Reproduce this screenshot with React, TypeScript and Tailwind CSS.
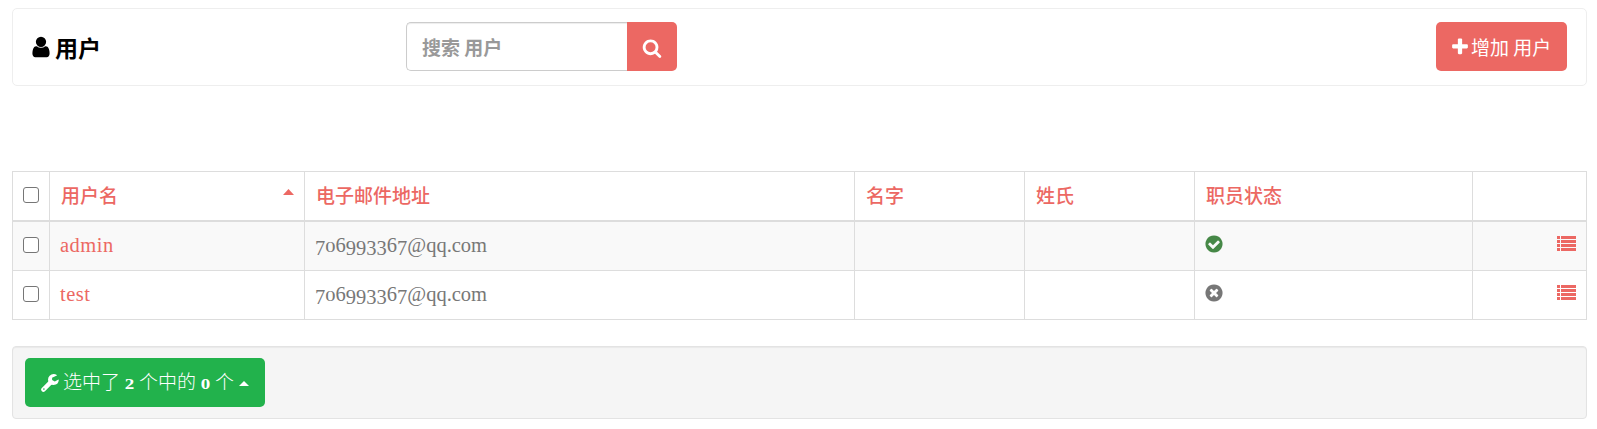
import type { ReactNode } from "react";

const CIRCLE =
  "M1664 896q0 209-103 385.5t-279.5 279.5-385.5 103-385.5-103-279.5-279.5-103-385.5 103-385.5 279.5-279.5 385.5-103 385.5 103 279.5 279.5 103 385.5z";

const paths = {
  user: "M1536 1399q0 109-62.5 187t-150.5 78h-854q-88 0-150.5-78t-62.5-187q0-85 8.5-160.5t31.5-152 58.5-131 94-89 134.5-34.5q131 128 313 128t313-128q76 0 134.5 34.5t94 89 58.5 131 31.5 152 8.5 160.5zm-256-887q0 159-112.5 271.5t-271.5 112.5-271.5-112.5-112.5-271.5 112.5-271.5 271.5-112.5 271.5 112.5 112.5 271.5z",
  search:
    "M1216 832q0-185-131.5-316.5t-316.5-131.5-316.5 131.5-131.5 316.5 131.5 316.5 316.5 131.5 316.5-131.5 131.5-316.5zm512 832q0 52-38 90t-90 38q-54 0-90-38l-343-342q-179 124-399 124-143 0-273.5-55.5t-225-150-150-225-55.5-273.5 55.5-273.5 150-225 225-150 273.5-55.5 273.5 55.5 225 150 150 225 55.5 273.5q0 220-124 399l343 343q37 37 37 90z",
  plus: "M1600 736v192q0 40-28 68t-68 28h-416v416q0 40-28 68t-68 28h-192q-40 0-68-28t-28-68v-416h-416q-40 0-68-28t-28-68v-192q0-40 28-68t68-28h416v-416q0-40 28-68t68-28h192q40 0 68 28t28 68v416h416q40 0 68 28t28 68z",
  check:
    "M1412 734q0-28-18-46l-91-90q-19-19-45-19t-45 19l-408 407-226-226q-19-19-45-19t-45 19l-91 90q-18 18-18 46 0 27 18 45l362 362q19 19 45 19 27 0 46-19l543-543q18-18 18-45z" +
    CIRCLE,
  times:
    "M1277 1122q0-26-19-45l-181-181 181-181q19-19 19-45 0-27-19-46l-90-90q-19-19-46-19-26 0-45 19l-181 181-181-181q-19-19-45-19-27 0-46 19l-90 90q-19 19-19 46 0 26 19 45l181 181-181 181q-19 19-19 45 0 27 19 46l90 90q19 19 46 19 26 0 45-19l181-181 181 181q19 19 45 19 27 0 46-19l90-90q19-19 19-46z" +
    CIRCLE,
};

function Icon({ name, className }: { name: keyof typeof paths; className: string }) {
  return (
    <svg viewBox="0 0 1792 1792" fill="currentColor" fillRule="evenodd" className={className}>
      <path d={paths[name]} />
    </svg>
  );
}

function WrenchIcon() {
  return (
    <svg viewBox="0 0 18 18" width="18" height="18" fill="none" stroke="currentColor" className="ml-px">
      <path d="M2.4 15.6L9.6 8.4" strokeWidth="4.4" strokeLinecap="round" />
      <path
        d="M15.8 1.1A5.3 5.3 0 0 0 12.6 0.1A5.6 5.6 0 0 0 7 5.7A5.6 5.6 0 0 0 12.6 11.1A5.5 5.5 0 0 0 17.8 6.1Q17.7 5.3 17 5.7L13.8 7.5L11.1 6V3.8L15.9 1.6Q16.1 1.3 15.8 1.1z"
        fill="currentColor"
        stroke="none"
      />
      <circle cx="2.9" cy="15.1" r="0.8" fill="#22b24c" stroke="none" />
    </svg>
  );
}

function ListIcon() {
  return (
    <svg viewBox="0 0 20 15" width="20" height="15" fill="currentColor" shapeRendering="crispEdges">
      {[0, 4, 8, 12].map((y) => (
        <g key={y}>
          <rect x="0" y={y} width="3" height="3" />
          <rect x="4" y={y} width="15" height="3" />
        </g>
      ))}
    </svg>
  );
}

/* Old-style numerals: 0-2 at x-height, 3 4 5 7 9 dropping below the baseline. */
function Figures({ text }: { text: string }) {
  return (
    <>
      {text.split(/([012]+|[34579]+)/).map((part, i) => {
        if (/^[012]/.test(part))
          return (
            <span key={i} className="inline-block origin-[50%_16.7px] scale-y-[0.72] leading-none">
              {part}
            </span>
          );
        if (/^[34579]/.test(part))
          return (
            <span key={i} className="relative top-[3px]">
              {part}
            </span>
          );
        return part;
      })}
    </>
  );
}

function Checkbox() {
  return (
    <span className="block size-4 rounded-[3px] border border-[#767676] bg-white" role="checkbox" aria-checked={false} />
  );
}

function Th({ children }: { children?: ReactNode }) {
  return (
    <th className="h-[49px] border border-b-2 border-[#ddd] px-[11px] pt-0 pb-px text-left font-['Noto_Sans_CJK_SC',sans-serif] text-[19px] leading-7 font-medium text-[#ec6863]">
      {children}
    </th>
  );
}

const users = [
  { name: "admin", email: "706993367@qq.com", staff: true },
  { name: "test", email: "706993367@qq.com", staff: false },
];

const cell = "border border-[#ddd] p-0 pl-[10px] pb-[2px]";

export default function App() {
  return (
    <div className="h-[429px] bg-white pt-2 pr-[10px] pl-3 font-['Liberation_Serif','Noto_Sans_CJK_SC',serif]">
      <header className="flex h-[78px] items-center rounded-[5px] border border-[#eee] pr-[19px] pb-[2px] pl-[18px] font-['Noto_Sans_CJK_SC',sans-serif]">
        <h1 className="flex w-[375px] items-center pt-[2px] text-[23px] font-bold text-black">
          <Icon name="user" className="-ml-[2px] h-[24px] w-[24px]" />
          <span className="ml-[2px]">用户</span>
        </h1>
        <div className="flex h-[49px] w-[271px]">
          <div className="flex w-[221px] items-center rounded-l-[5px] border border-r-0 border-[#ccc] pt-[2px] pl-[15px] text-[19px] font-bold text-[#999] shadow-[inset_0_1px_1px_rgba(0,0,0,0.075)]">
            搜索 用户
          </div>
          <button className="flex w-[50px] items-center justify-center rounded-r-[5px] bg-[#ec6863] pt-[3px] text-white">
            <Icon name="search" className="size-[20px]" />
          </button>
        </div>
        <button className="ml-auto flex h-[49px] w-[131px] items-center rounded-[5px] bg-[#ec6863] pt-[2px] pl-[14px] text-[19px] font-normal text-white">
          <Icon name="plus" className="size-[20px]" />
          <span className="ml-px whitespace-nowrap">增加 用户</span>
        </button>
      </header>

      <table className="mt-[85px] w-[1575px] table-fixed border-collapse text-[20.5px] leading-7">
        <colgroup>
          <col className="w-[37px]" />
          <col className="w-[255px]" />
          <col className="w-[550px]" />
          <col className="w-[170px]" />
          <col className="w-[170px]" />
          <col className="w-[278px]" />
          <col className="w-[114px]" />
        </colgroup>
        <thead>
          <tr>
            <th className="border border-b-2 border-[#ddd] p-0 pb-[2px] pl-[10px]">
              <Checkbox />
            </th>
            <Th>
              <div className="flex justify-between">
                <span>用户名</span>
                <svg viewBox="0 0 11 6" width="11" height="6" fill="currentColor" className="mt-[8px] -mr-px">
                  <path d="M0 6L5.5 0L11 6z" />
                </svg>
              </div>
            </Th>
            <Th>电子邮件地址</Th>
            <Th>名字</Th>
            <Th>姓氏</Th>
            <Th>职员状态</Th>
            <Th />
          </tr>
        </thead>
        <tbody>
          {users.map((u) => (
            <tr key={u.name} className="h-[49px] odd:h-[50px] odd:bg-[#f9f9f9]">
              <td className={cell}>
                <Checkbox />
              </td>
              <td className={`${cell} tracking-[0.5px] text-[#ec6863]`}>{u.name}</td>
              <td className={`${cell} text-[#777]`}>
                <Figures text={u.email} />
              </td>
              <td className={cell} />
              <td className={cell} />
              <td className={cell}>
                <Icon
                  name={u.staff ? "check" : "times"}
                  className={u.staff ? "-mt-px -ml-[1px] size-[20px] text-[#468847]" : "-mt-[2px] -ml-[1px] size-[20px] text-[#777]"}
                />
              </td>
              <td className="border border-[#ddd] p-0 pr-[9px] pb-[2px] text-[#ec6863]">
                <div className="-mt-[3px] flex justify-end">
                  <ListIcon />
                </div>
              </td>
            </tr>
          ))}
        </tbody>
      </table>

      <footer className="mt-[26px] flex h-[73px] items-center rounded-[4px] border border-[#e3e3e3] bg-[#f5f5f5] pl-3 shadow-[inset_0_1px_1px_rgba(0,0,0,0.05)]">
        <button className="flex h-[49px] w-[240px] items-center rounded-[5px] bg-[#22b24c] pl-[15px] text-[19px] text-white">
          <WrenchIcon />
          <span className="ml-[4px] pt-[2px] font-light whitespace-nowrap">
            选中了{" "}
            <b className="font-bold">
              <Figures text="2" />
            </b>{" "}
            个中的{" "}
            <b className="font-bold">
              <Figures text="0" />
            </b>{" "}
            个
          </span>
          <svg viewBox="0 0 10 5" width="10" height="5" fill="currentColor" className="mt-px ml-[5px]">
            <path d="M0 5L5 0L10 5z" />
          </svg>
        </button>
      </footer>
    </div>
  );
}
